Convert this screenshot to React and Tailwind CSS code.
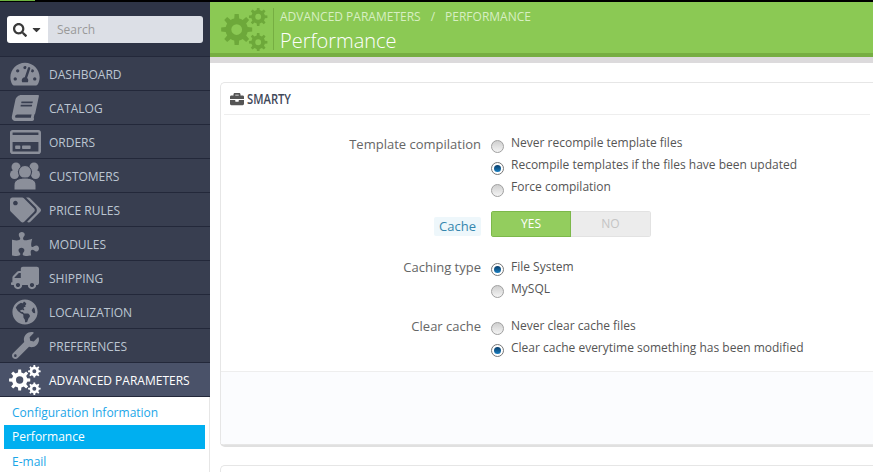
import React from "react";
import {
  FaTachometerAlt,
  FaBook,
  FaRegCreditCard,
  FaTags,
  FaPuzzlePiece,
  FaTruck,
  FaGlobeAmericas,
  FaWrench,
  FaSearch,
  FaCaretDown,
  FaBriefcase,
} from "react-icons/fa";

// builds a toothed gear outline, used for the three-gear "cogs" logo
function gearPath(cx, cy, outer, inner, hole, teeth) {
  let d = "";
  const step = (Math.PI * 2) / teeth;
  for (let i = 0; i < teeth; i++) {
    const a = i * step;
    const pts = [
      [inner, a - step * 0.5],
      [inner, a - step * 0.28],
      [outer, a - step * 0.17],
      [outer, a + step * 0.17],
      [inner, a + step * 0.28],
    ];
    pts.forEach(([r, t], j) => {
      const x = (cx + r * Math.cos(t)).toFixed(2);
      const y = (cy + r * Math.sin(t)).toFixed(2);
      d += `${i === 0 && j === 0 ? "M" : "L"}${x} ${y} `;
    });
  }
  d += "Z ";
  d += `M${cx + hole} ${cy} A${hole} ${hole} 0 1 0 ${cx - hole} ${cy} A${hole} ${hole} 0 1 0 ${cx + hole} ${cy} Z`;
  return d;
}

function Cogs({ className }) {
  return (
    <svg viewBox="0 0 48 44" className={className} fill="currentColor" fillRule="evenodd">
      <path d={gearPath(16, 22, 16, 11.5, 5.5, 8)} />
      <path d={gearPath(38, 9, 9.5, 7, 3, 8)} />
      <path d={gearPath(38, 35, 9.5, 7, 3, 8)} />
    </svg>
  );
}

function People({ className }) {
  return (
    <svg viewBox="0 0 30 28" className={className} fill="currentColor">
      <circle cx="6" cy="5" r="4.5" />
      <circle cx="24" cy="5" r="4.5" />
      <circle cx="4.5" cy="12.5" r="4.5" />
      <circle cx="25.5" cy="12.5" r="4.5" />
      <circle cx="15" cy="10" r="6.5" stroke="#383e50" strokeWidth="1" />
      <path d="M4 28 V23 C4 18 9 16 15 16 C21 16 26 18 26 23 V28 Z" stroke="#383e50" strokeWidth="1" />
    </svg>
  );
}

const navItems = [
  { label: "Dashboard", icon: <FaTachometerAlt className="h-[26px] w-[30px]" /> },
  { label: "Catalog", icon: <FaBook className="h-[26px] w-[26px] -skew-x-12" /> },
  { label: "Orders", icon: <FaRegCreditCard className="h-[30px] w-[31px]" /> },
  { label: "Customers", icon: <People className="h-[28px] w-[30px]" /> },
  { label: "Price Rules", icon: <FaTags className="h-[28px] w-[31px]" /> },
  { label: "Modules", icon: <FaPuzzlePiece className="h-[26px] w-[27px]" /> },
  { label: "Shipping", icon: <FaTruck className="h-[26px] w-[28px] -scale-x-100" /> },
  { label: "Localization", icon: <FaGlobeAmericas className="h-[26px] w-[26px]" /> },
  { label: "Preferences", icon: <FaWrench className="h-[27px] w-[27px]" /> },
];

function NavRow({ label, icon, active }) {
  return (
    <div
      className={`flex h-[34px] shrink-0 items-center border-b border-[#23283a] ${
        active ? "bg-[#4a5269] text-white" : "bg-[#383e50] text-[#bcc6d2]"
      }`}
    >
      <div className={`flex w-[49px] shrink-0 justify-center pl-[1px] ${active ? "text-white" : "text-[#8b8f9a]"}`}>
        {icon}
      </div>
      <span className="pt-[2px] text-[12px] uppercase">{label}</span>
    </div>
  );
}

function Radio({ checked }) {
  return (
    <span
      className={`flex h-[13px] w-[13px] shrink-0 items-center justify-center rounded-full border ${
        checked ? "border-[#777] bg-white" : "border-[#a0a0a0] bg-gradient-to-b from-[#cfcfcf] to-[#f4f4f4]"
      }`}
    >
      {checked && <span className="h-[7px] w-[7px] rounded-full bg-gradient-to-b from-[#0a3f6c] to-[#1a7fc0]" />}
    </span>
  );
}

function RadioGroup({ options, selected, textClass = "top-[-2px]" }) {
  return (
    <div className="flex flex-col">
      {options.map((o, i) => (
        <div key={o} className="flex h-[22px] items-center gap-[7px]">
          <Radio checked={i === selected} />
          <span className={`relative text-[12px] text-[#555] ${textClass}`}>{o}</span>
        </div>
      ))}
    </div>
  );
}

function FormRow({ label, children, className }) {
  return (
    <div className={`flex ${className || ""}`}>
      <div className="relative top-[-1px] flex h-[22px] w-[260px] shrink-0 items-center justify-end text-[13px] text-[#666]">
        {label}
      </div>
      <div className="pl-[10px]">{children}</div>
    </div>
  );
}

export default function App() {
  return (
    <div className="flex h-[472px] w-[873px] overflow-hidden bg-white font-['Open_Sans',sans-serif]">
      {/* Sidebar */}
      <aside className="flex w-[210px] shrink-0 flex-col bg-[#2e3446]">
        <div className="h-[2px] shrink-0 bg-black">
          <div className="h-[1px] w-[35px] bg-[#6cb33f]" />
        </div>
        <div className="h-[55px] shrink-0 border-b border-[#23283a] px-[7px] pt-[14px]">
          <div className="flex h-[27px] overflow-hidden rounded-[3px]">
            <div className="flex w-[41px] items-center justify-center gap-[4px] bg-white text-[#3a3a3a]">
              <FaSearch className="h-[14px] w-[14px]" />
              <FaCaretDown className="h-[13px] w-[11px]" />
            </div>
            <div className="flex flex-1 items-center bg-[#dcdfe6] pl-[9px] text-[12px] text-[#999]">Search</div>
          </div>
        </div>
        {navItems.map((item) => (
          <NavRow key={item.label} {...item} />
        ))}
        <NavRow label="Advanced Parameters" icon={<Cogs className="h-[30px] w-[32px]" />} active />
        <div className="flex-1 border-r border-[#e6e6e6] bg-white px-[4px] pt-[4px]">
          <div className="flex h-[24px] items-center pl-[8px] text-[12px] text-[#1ba6e8]">Configuration Information</div>
          <div className="flex h-[24px] items-center bg-[#00aff0] pl-[8px] text-[12px] text-white">Performance</div>
          <div className="flex h-[25px] items-center pl-[8px] text-[12px] text-[#1ba6e8]">E-mail</div>
        </div>
      </aside>

      {/* Main */}
      <main className="min-w-0 flex-1">
        <div className="h-[2px] bg-black" />
        <header className="flex h-[55px] items-start border-b-4 border-[#76ae42] bg-[#8bc954]">
          <Cogs className="ml-[11px] mt-[6px] h-[43px] w-[47px] text-[#6da83a]" />
          <div className="ml-[5px] mt-[6px] h-[42px] border-l border-[#76ae42] pl-[6px]">
            <div className="flex h-[18px] items-center text-[12px] uppercase text-[#d7efc2]">
              Advanced Parameters
              <span className="mx-[10px]">/</span>
              Performance
            </div>
            <div className="mt-[1px] text-[20px] font-light leading-[27px] text-white">Performance</div>
          </div>
        </header>
        <div className="h-[6px] bg-[#dcdadc]" />

        <div className="pl-[10px] pt-[19px]">
          <section className="rounded-l-[5px] border-y border-l border-[#e6e6e6] shadow-[0_2px_0_#e0e0e0]">
            <div className="mx-[3px] flex h-[32px] items-center gap-[3px] border-b border-[#eeeeee] pl-[6px] text-[#555]">
              <FaBriefcase className="h-[14px] w-[14px]" />
              <span className="inline-block origin-left scale-x-[0.8] text-[14px] font-semibold text-[#3f4859]">SMARTY</span>
            </div>
            <div className="h-[256px] pt-[20px]">
              <FormRow label="Template compilation">
                <RadioGroup
                  selected={1}
                  textClass="top-[-3px]"
                  options={[
                    "Never recompile template files",
                    "Recompile templates if the files have been updated",
                    "Force compilation",
                  ]}
                />
              </FormRow>
              <div className="mt-[10px] flex">
                <div className="flex w-[260px] shrink-0 justify-end">
                  <span className="mt-[6px] flex h-[19px] items-center rounded-[2px] bg-[#eef7fb] px-[5px] text-[13px] text-[#3586ae]">
                    Cache
                  </span>
                </div>
                <div className="ml-[10px] flex h-[26px] w-[160px] overflow-hidden rounded-[3px] text-[12px]">
                  <div className="flex w-[80px] items-center justify-center border border-[#7cb84a] bg-[#93cd5e] font-medium text-white">
                    YES
                  </div>
                  <div className="flex w-[80px] items-center justify-center border border-l-0 border-[#e2e2e2] bg-[#ececec] font-medium text-[#c4c4c4]">
                    NO
                  </div>
                </div>
              </div>
              <FormRow label="Caching type" className="mt-[21px]">
                <RadioGroup selected={0} options={["File System", "MySQL"]} />
              </FormRow>
              <FormRow label="Clear cache" className="mt-[15px]">
                <RadioGroup
                  selected={1}
                  options={["Never clear cache files", "Clear cache everytime something has been modified"]}
                />
              </FormRow>
            </div>
            <div className="h-[73px] border-t border-[#eeeeee] bg-[#fbfcfe]" />
          </section>
          <section className="mt-[20px] h-[20px] rounded-tl-[5px] border-l border-t border-[#e6e6e6]" />
        </div>
      </main>
    </div>
  );
}
